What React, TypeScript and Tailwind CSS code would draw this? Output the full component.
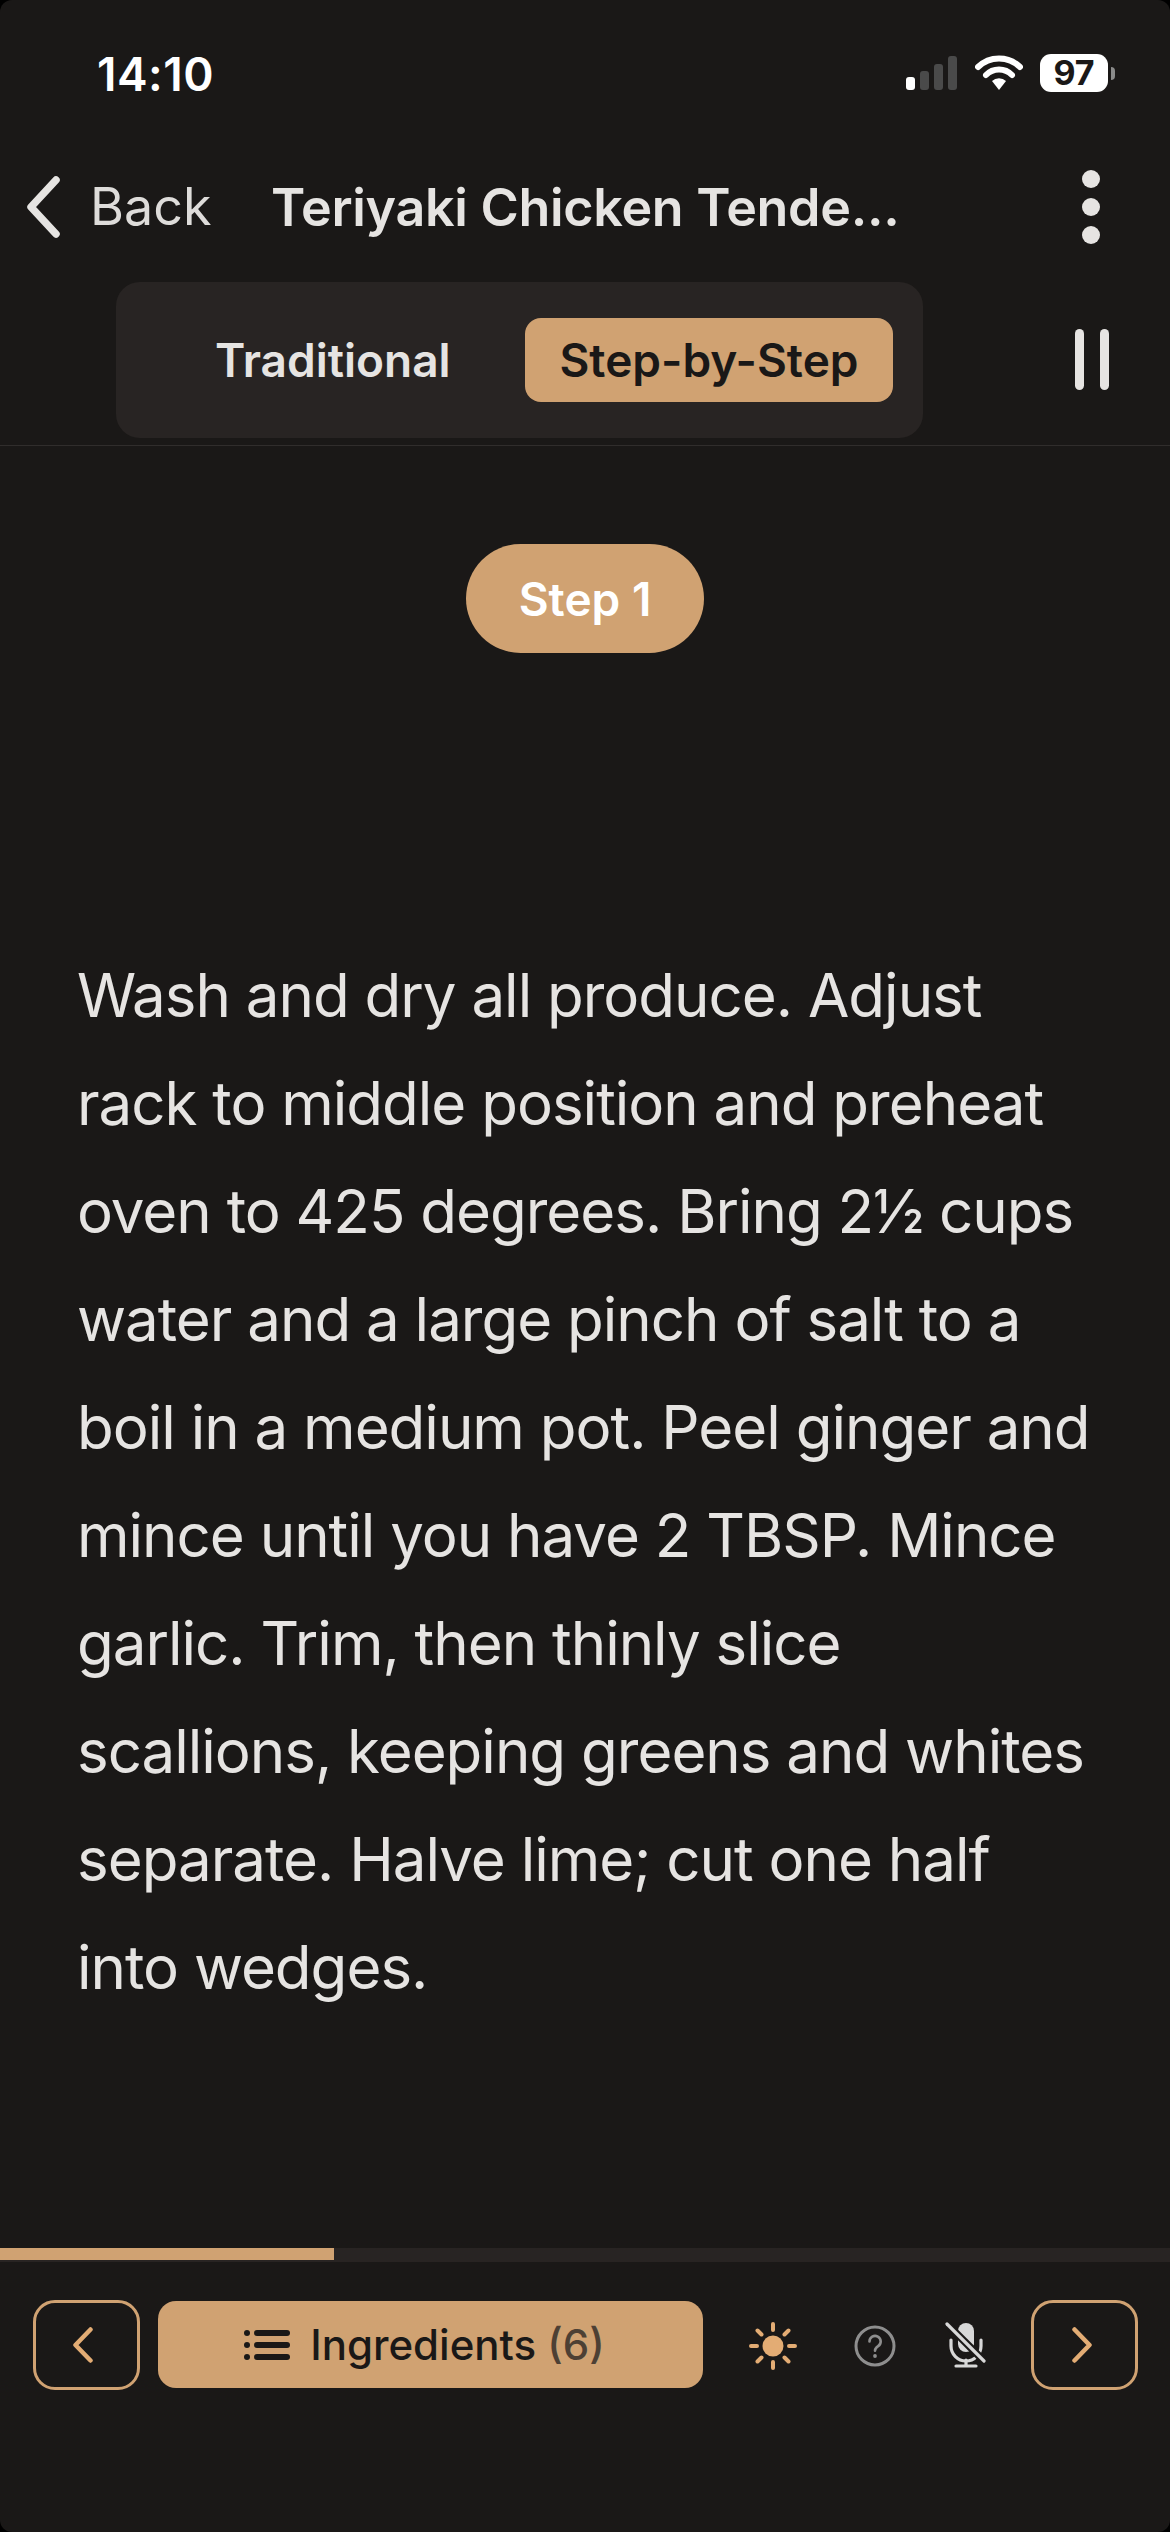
const stepText = [
  'Wash and dry all produce. Adjust',
  'rack to middle position and preheat',
  'oven to 425 degrees. Bring 2½ cups',
  'water and a large pinch of salt to a',
  'boil in a medium pot. Peel ginger and',
  'mince until you have 2 TBSP. Mince',
  'garlic. Trim, then thinly slice',
  'scallions, keeping greens and whites',
  'separate. Halve lime; cut one half',
  'into wedges.',
];

function StatusIcons() {
  return (
    <div className="flex items-center">
      <svg width="52" height="36" viewBox="0 0 52 36" className="mr-[17px]">
        <rect x="0" y="22" width="9" height="13" rx="3" fill="#ffffff" />
        <rect x="14" y="16" width="9" height="19" rx="3" fill="#4a4a4a" />
        <rect x="28" y="9" width="9" height="26" rx="3" fill="#4a4a4a" />
        <rect x="42" y="1" width="9" height="34" rx="3" fill="#4a4a4a" />
      </svg>
      <svg width="48" height="36" viewBox="0 0 48 36" className="mr-[17px]">
        <path d="M3 12 A30 30 0 0 1 45 12" fill="none" stroke="#fff" strokeWidth="6" strokeLinecap="round" />
        <path d="M11 20 A18 18 0 0 1 37 20" fill="none" stroke="#fff" strokeWidth="6" strokeLinecap="round" />
        <path d="M17 26 L24 35 L31 26 A10 10 0 0 0 17 26 Z" fill="#fff" />
      </svg>
      <div className="flex h-[38px] w-[68px] items-center justify-center rounded-[11px] bg-white text-[34px] font-bold leading-none text-[#1a1817]">
        97
      </div>
      <div className="ml-[3px] h-[13px] w-[4px] rounded-r-full bg-[#8a8a8a]" />
    </div>
  );
}

function BackChevron() {
  return (
    <svg width="36" height="62" viewBox="0 0 36 62" fill="none">
      <path d="M31 4L6 31L31 58" stroke="#e6e4e2" strokeWidth="7.5" strokeLinecap="round" strokeLinejoin="round" />
    </svg>
  );
}

function StepChevron({ flip }: { flip?: boolean }) {
  return (
    <svg width="20" height="36" viewBox="0 0 20 36" fill="none" className={flip ? 'mr-[6px] rotate-180' : 'mr-[6px]'}>
      <path d="M17.5 2.5L2.5 18L17.5 33.5" stroke="#e3ac74" strokeWidth="4.5" strokeLinecap="round" strokeLinejoin="round" />
    </svg>
  );
}

function SunIcon() {
  return (
    <svg width="50" height="50" viewBox="0 0 50 50" stroke="#e3ac74" strokeWidth="4" strokeLinecap="round">
      <circle cx="25" cy="25" r="10.5" fill="#e3ac74" stroke="none" />
      <path d="M25 3v6M25 41v6M3 25h6M41 25h6M9.5 9.5l4 4M36.5 36.5l4 4M9.5 40.5l4-4M36.5 13.5l4-4" fill="none" />
    </svg>
  );
}

function HelpIcon() {
  return (
    <svg width="42" height="42" viewBox="0 0 42 42" fill="none">
      <circle cx="21" cy="21" r="19" stroke="#8e8e8e" strokeWidth="3" />
      <path d="M15.5 16.5a5.6 5.6 0 1 1 8.6 4.7c-2 1.3-3.1 2.4-3.1 4.6" stroke="#8e8e8e" strokeWidth="2.6" strokeLinecap="round" />
      <circle cx="21" cy="31" r="1.9" fill="#8e8e8e" />
    </svg>
  );
}

function MicOffIcon() {
  return (
    <svg width="42" height="46" viewBox="0 0 42 46" fill="none">
      <rect x="13" y="1" width="16" height="29" rx="8" fill="#d8d8d8" />
      <path d="M6 18v6a15 15 0 0 0 30 0v-6" stroke="#d8d8d8" strokeWidth="3.2" strokeLinecap="round" />
      <path d="M21 38v5M11 44h20" stroke="#d8d8d8" strokeWidth="3.2" strokeLinecap="round" />
      <path d="M2 2L39 39" stroke="#1a1817" strokeWidth="7.5" />
      <path d="M2 2L39 39" stroke="#d8d8d8" strokeWidth="3.2" strokeLinecap="round" />
    </svg>
  );
}

function ListIcon() {
  return (
    <svg width="46" height="32" viewBox="0 0 46 32" fill="#1a1817">
      <circle cx="3" cy="4" r="3" />
      <circle cx="3" cy="16" r="3" />
      <circle cx="3" cy="28" r="3" />
      <rect x="10" y="1" width="36" height="6" rx="3" />
      <rect x="10" y="13" width="36" height="6" rx="3" />
      <rect x="10" y="25" width="36" height="6" rx="3" />
    </svg>
  );
}

export default function App() {
  return (
    <div className="h-[2532px] w-[1170px] overflow-hidden bg-black font-['Inter',sans-serif]">
      <div className="flex h-full flex-col rounded-[12px] bg-[#1a1817]">
        {/* status bar */}
        <div className="flex h-[148px] items-start justify-between pl-[97px] pr-[55px] pt-[48px]">
          <span className="text-[46px] font-semibold leading-[52px] tracking-[0.5px] text-white">14:10</span>
          <div className="pt-[6px]">
            <StatusIcons />
          </div>
        </div>

        {/* nav */}
        <div className="flex h-[118px] items-center pl-[25px] pr-[70px]">
          <BackChevron />
          <span className="ml-[29px] w-[181px] text-[52px] leading-none text-[#dedcda]">Back</span>
          <span className="mt-[2px] flex-1 text-[52px] font-semibold leading-none tracking-[-0.3px] text-[#e6e4e2]">Teriyaki Chicken Tende...</span>
          <div className="flex flex-col gap-[10px]">
            <div className="size-[18px] rounded-full bg-[#e6e4e2]" />
            <div className="size-[18px] rounded-full bg-[#e6e4e2]" />
            <div className="size-[18px] rounded-full bg-[#e6e4e2]" />
          </div>
        </div>

        {/* mode toggle */}
        <div className="flex h-[180px] items-start border-b border-[#302d2c] pl-[116px] pt-[16px]">
          <div className="flex h-[156px] w-[807px] items-center rounded-[24px] bg-[#282423] pl-[99px] pr-[30px]">
            <span className="text-[46px] font-semibold leading-none text-[#e6e4e2]">Traditional</span>
            <div className="ml-auto flex h-[84px] w-[368px] items-center justify-center rounded-[16px] bg-[#d0a272] text-[46px] font-semibold leading-none text-[#1a1817]">
              Step-by-Step
            </div>
          </div>
          <div className="ml-[152px] mt-[47px] flex gap-[16px]">
            <div className="h-[61px] w-[9px] rounded-full bg-[#e6e4e2]" />
            <div className="h-[61px] w-[9px] rounded-full bg-[#e6e4e2]" />
          </div>
        </div>

        {/* step */}
        <div className="flex flex-1 flex-col">
          <div className="flex justify-center pt-[98px]">
            <div className="flex h-[109px] w-[238px] items-center justify-center rounded-full bg-[#d0a272] text-[46px] font-semibold leading-none text-white">
              Step 1
            </div>
          </div>
          <div className="pl-[77px] pt-[288px] text-[60px] leading-[108px] tracking-[-1px] text-[#e6e4e2]">
            {stepText.map((line) => (
              <div key={line} className="whitespace-nowrap">
                {line}
              </div>
            ))}
          </div>
        </div>

        {/* progress */}
        <div className="h-[14px] bg-[#282423]">
          <div className="h-[12px] w-[334px] bg-[#d0a272]" />
        </div>

        {/* toolbar */}
        <div className="flex h-[270px] items-start pl-[33px] pr-[32px] pt-[38px]">
          <button className="flex h-[90px] w-[107px] items-center justify-center rounded-[22px] border-[3px] border-[#d0a272]">
            <StepChevron />
          </button>
          <button className="ml-[18px] mt-[1px] flex h-[87px] w-[546px] items-center justify-center gap-[20px] rounded-[18px] bg-[#d0a272] pr-[12px] text-[42px] font-medium leading-none text-[#1a1817]">
            <ListIcon />
            <span>
              Ingredients <span className="text-[#4d4034]">(6)</span>
            </span>
          </button>
          <div className="ml-[45px] mt-[21px] w-[50px]">
            <SunIcon />
          </div>
          <div className="ml-[56px] pt-[25px]">
            <HelpIcon />
          </div>
          <div className="ml-[49px] pt-[22px]">
            <MicOffIcon />
          </div>
          <button className="ml-[44px] flex h-[90px] w-[107px] items-center justify-center rounded-[22px] border-[3px] border-[#d0a272]">
            <StepChevron flip />
          </button>
        </div>
      </div>
    </div>
  );
}
